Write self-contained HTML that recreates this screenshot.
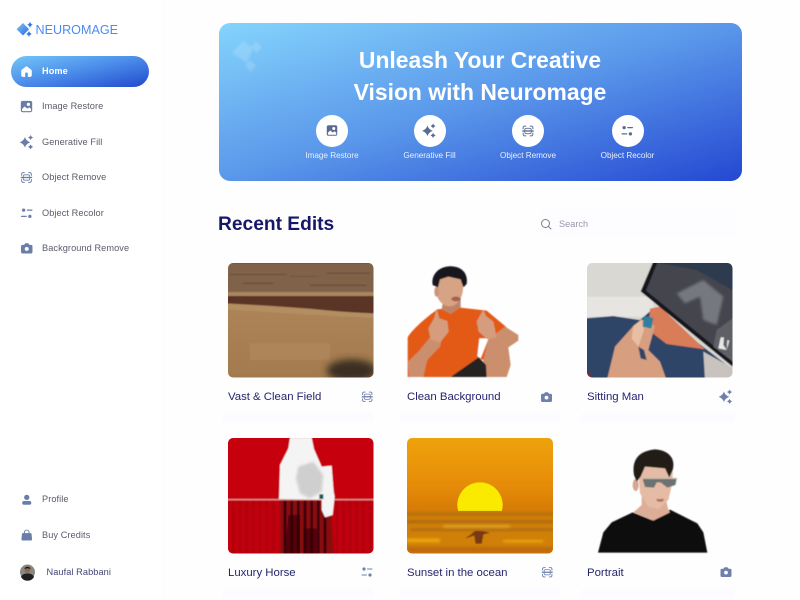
<!DOCTYPE html>
<html><head><meta charset="utf-8"><style>
html,body{margin:0;padding:0;width:800px;height:600px;overflow:hidden;background:#fefeff;font-family:"Liberation Sans",sans-serif}
.t{position:absolute;white-space:nowrap;line-height:1;filter:blur(.25px)}
.nav{font-size:9.2px;color:#5b5b6b;left:42px;letter-spacing:.08px}
.cap{font-size:8.2px;color:#e8effc;letter-spacing:-.03px;transform:translateX(-50%)}
.ttl{font-size:11.4px;color:#25256f;letter-spacing:-.01px}
.h{font-size:22.9px;font-weight:700;color:#fff;left:218px;width:524px;text-align:center}
.circ{position:absolute;width:32px;height:32px;border-radius:50%;background:#fff;top:115px}
.sh{position:absolute;background:#fcfbff;height:10px;border-radius:4px}
svg{position:absolute;left:0;top:0}
</style></head><body>
<div style="position:absolute;left:0;top:0;width:162px;height:600px;background:#fff;box-shadow:1px 0 3px #fcfbff"></div>
<div style="position:absolute;left:11px;top:56px;width:138px;height:31px;border-radius:16px;background:linear-gradient(to bottom right,#74c6f7 0%,#4a8bea 50%,#2149cc 100%)"></div>
<div style="position:absolute;left:218.5px;top:23px;width:523.5px;height:158px;border-radius:11px;background:linear-gradient(to bottom right,#84d4fc 0%,#5a97ea 50%,#2448d2 100%)"></div>
<div class="sh" style="left:222px;top:413px;width:152px"></div><div class="sh" style="left:400px;top:413px;width:160px"></div><div class="sh" style="left:580px;top:413px;width:155px"></div>
<div class="sh" style="left:222px;top:589px;width:152px"></div><div class="sh" style="left:400px;top:589px;width:160px"></div><div class="sh" style="left:580px;top:589px;width:155px"></div>
<div class="sh" style="left:540px;top:209px;width:196px;height:28px;background:#fdfdff"></div>
<div class="circ" style="left:316px"></div><div class="circ" style="left:414px"></div><div class="circ" style="left:512px"></div><div class="circ" style="left:611.5px"></div>

<svg width="800" height="600" viewBox="0 0 800 600">
<defs>
<filter id="b" x="-5%" y="-5%" width="110%" height="110%"><feGaussianBlur stdDeviation="1.6"/></filter>
<filter id="bb" x="-30%" y="-30%" width="160%" height="160%"><feGaussianBlur stdDeviation="11"/></filter>
<filter id="bs" x="-20%" y="-20%" width="140%" height="140%"><feGaussianBlur stdDeviation="4"/></filter>
<filter id="bi" x="-10%" y="-10%" width="120%" height="120%"><feGaussianBlur stdDeviation=".25"/></filter>
<filter id="bd" x="-20%" y="-20%" width="140%" height="140%"><feGaussianBlur stdDeviation="1"/></filter>
<clipPath id="c1"><rect x="228" y="263" width="145.5" height="114.5" rx="5"/></clipPath>
<clipPath id="c3"><rect x="587" y="263" width="145.5" height="114.5" rx="5"/></clipPath>
<clipPath id="c4"><rect x="228" y="438" width="145.5" height="115.5" rx="5"/></clipPath>
<clipPath id="c5"><rect x="407" y="438" width="146" height="115.5" rx="5"/></clipPath>
<clipPath id="sun"><rect x="700" y="100" width="220" height="158"/></clipPath>
<linearGradient id="g5" x1="0" y1="0" x2="0" y2="1"><stop offset="0" stop-color="#eea40c"/><stop offset=".65" stop-color="#e68c08"/><stop offset="1" stop-color="#d57a06"/></linearGradient>
<linearGradient id="gf" x1="0" y1="0" x2="0" y2="1"><stop offset="0" stop-color="#b58b5e"/><stop offset="1" stop-color="#a27a4e"/></linearGradient>
<linearGradient id="gl" x1="0" y1="0" x2="1" y2="1"><stop offset="0" stop-color="#7cc8f8"/><stop offset="1" stop-color="#2f66e0"/></linearGradient>
<symbol id="home" viewBox="0 0 24 24"><path d="M12 2 3.500 8.500C2.700 9.100 2.300 10 2.300 11v8c0 1.500 1.200 3 3 3H9.500v-6.300c0-1.200 1-2.200 2.500-2.200s2.500 1 2.500 2.200V22h4.200c1.800 0 3-1.500 3-3v-8c0-1-.4-1.900-1.200-2.500z"/></symbol>
<symbol id="img" viewBox="0 0 24 24"><path fill-rule="evenodd" d="M5 1.500h14A3.500 3.500 0 0 1 22.500 5v14a3.500 3.500 0 0 1-3.500 3.500H5A3.500 3.500 0 0 1 1.500 19V5A3.500 3.500 0 0 1 5 1.500zM15.500 5a3 3 0 1 0 0 6 3 3 0 0 0 0-6zM3.800 16.500V19A1.500 1.500 0 0 0 5 20.500h14a1.500 1.500 0 0 0 1.500-1.500v-2.500L17 13.500l-3.500 2.500-5-4z"/></symbol>
<symbol id="spark" viewBox="0 0 24 24"><path d="M9.500 4Q11 10 18 12.500 11 15 9.500 21 8 15 1 12.500 8 10 9.500 4zM18.500 0.500Q19.300 3.400 22.800 4.800 19.300 6.200 18.500 9 17.700 6.200 14.200 4.800 17.700 3.400 18.500 0.500zM18.500 15.500Q19.300 18.300 22.800 19.700 19.300 21 18.500 24 17.700 21 14.200 19.700 17.700 18.300 18.500 15.500z"/></symbol>
<symbol id="scan" viewBox="0 0 24 24"><path fill="none" stroke="currentColor" stroke-width="1.800" stroke-linecap="round" d="M3 8V6a3 3 0 0 1 3-3h2M16 3h2a3 3 0 0 1 3 3v2M21 16v2a3 3 0 0 1-3 3h-2M8 21H6a3 3 0 0 1-3-3v-2"/><rect x="6" y="7" width="12" height="10" rx="3" fill="none" stroke="currentColor" stroke-width="1.500"/><path stroke="currentColor" stroke-width="2.500" d="M1.500 12h21"/></symbol>
<symbol id="sl" viewBox="0 0 24 24"><circle cx="6" cy="6" r="3.200"/><circle cx="18" cy="18" r="3.200"/><path fill="none" stroke="currentColor" stroke-width="2.200" stroke-linecap="round" d="M13 6h9M2 18h9"/></symbol>
<symbol id="cam" viewBox="0 0 24 24"><path fill-rule="evenodd" d="M9 2.500h6l2 3h3a3 3 0 0 1 3 3V19a3 3 0 0 1-3 3H4a3 3 0 0 1-3-3V8.500a3 3 0 0 1 3-3h3zm3 7a3.800 3.800 0 1 0 0 7.600 3.800 3.800 0 0 0 0-7.600z"/></symbol>
<symbol id="user" viewBox="0 0 24 24"><circle cx="12" cy="7" r="5.500"/><rect x="2.500" y="14.500" width="19" height="8" rx="4"/></symbol>
<symbol id="bag" viewBox="0 0 24 24"><path d="M4.500 8h15c1 0 1.500.6 1.700 1.500l1 10c.1 1.500-.8 2.500-2.200 2.500H4c-1.400 0-2.300-1-2.200-2.500l1-10C3 8.600 3.500 8 4.500 8z"/><path fill="none" stroke="currentColor" stroke-width="1.800" d="M7.500 11V6.500a4.500 4.500 0 0 1 9 0V11"/></symbol>
</defs>

<!-- logo -->
<g filter="url(#bi)">
<path d="M23 23 29 29.300 23 35.500 16.500 29.300z" fill="url(#gl)"/>
<g fill="#2f78ea"><path d="M30 21.500Q30.500 24 32.800 24.800 30.500 25.500 30 28 29.500 25.500 27.200 24.800 29.500 24 30 21.500z"/><path d="M29 30.800Q29.500 33 31.800 34 29.500 34.800 29 37 28.500 34.800 26.200 34 28.500 33 29 30.800z"/></g>
</g>

<!-- nav icons -->
<g fill="#fff" color="#fff" filter="url(#bi)"><use href="#home" x="20" y="65" width="13" height="13"/></g>
<g fill="#6a7ea8" color="#6a7ea8" filter="url(#bi)">
<use href="#img" x="20" y="100" width="13" height="13"/>
<use href="#spark" x="19" y="134.500" width="15" height="15"/>
<use href="#scan" x="20" y="171" width="13" height="13"/>
<use href="#sl" x="20.500" y="207" width="12.500" height="12.500"/>
<use href="#cam" x="20.500" y="242" width="12.500" height="12.500"/>
<use href="#user" x="21" y="494" width="11.500" height="11.500"/>
<use href="#bag" x="20.500" y="529" width="12.500" height="12.500"/>
</g>
<!-- avatar -->
<circle cx="27.500" cy="572" r="7.500" fill="#8a8780"/>
<path d="M21 577c1-3 4-3.500 6.500-3.500s5.500.5 6.500 3.500a7.500 7.500 0 0 1-13 0z" fill="#1f1f20"/>
<circle cx="27.500" cy="570" r="2.800" fill="#8d6a56"/><path d="M24.500 569c0-3 6-3 6 0-2-1-4-1-6 0z" fill="#1c1614"/>

<!-- hero sparkle deco -->
<g fill="#fff" opacity=".16" filter="url(#bd)"><path d="M243 41 253 48 247 63 232 53z"/><path d="M256 42 262 47 257 53 251 47z"/><path d="M250 60 256 65 251 72 245 66z"/></g>
<!-- hero icons -->
<g fill="#5a6a92" color="#5a6a92" filter="url(#bi)">
<use href="#img" x="326" y="124.500" width="12" height="12"/>
<use href="#spark" x="421.500" y="123" width="15" height="15"/>
<use href="#scan" x="521.500" y="124.500" width="13" height="13"/>
<use href="#sl" x="621" y="124.500" width="12.500" height="12.500"/>
</g>
<!-- search -->
<circle cx="545.500" cy="223.500" r="4" fill="none" stroke="#7f7b95" stroke-width="1"/><path d="M548.500 226.500l2.500 2.500" stroke="#7f7b95" stroke-width="1" stroke-linecap="round"/>

<!-- row icons -->
<g fill="#6f80ac" color="#6f80ac" filter="url(#bi)">
<use href="#scan" x="361" y="390.500" width="12.500" height="12.500"/>
<use href="#cam" x="540.500" y="391" width="12" height="12"/>
<use href="#spark" x="718" y="389" width="15" height="15"/>
<use href="#sl" x="361" y="566" width="12" height="12"/>
<use href="#scan" x="541" y="566" width="12.500" height="12.500"/>
<use href="#cam" x="720" y="566" width="12" height="12"/>
</g>

<!-- 1 field -->
<g clip-path="url(#c1)"><g transform="translate(210,250) scale(.33333)"><g filter="url(#b)">
<rect x="50" y="30" width="445" height="355" fill="url(#gf)"/>
<rect x="50" y="30" width="445" height="100" fill="#80624a"/>
<rect x="50" y="30" width="445" height="10" fill="#644c3a"/>
<path d="M60 72H230V75H60zM240 78H320V80H240zM350 68H480V71H350z" fill="#654b38"/>
<path d="M100 98H190V102H100zM300 104H470V108H300z" fill="#6a4f3b"/>
<rect x="50" y="126" width="445" height="12" fill="#a98560"/>
<path d="M50 138H495V190L400 186 300 176 190 168 120 164 50 160z" fill="#5a3625"/>
<path d="M50 162 190 170 300 178 495 192V204L300 194 50 178z" fill="#b48e63"/>
<rect x="120" y="280" width="240" height="50" fill="#b08b5f" opacity=".6"/>
</g><ellipse cx="425" cy="362" rx="75" ry="34" fill="#3a2f24" filter="url(#bb)"/></g></g>

<!-- 2 man -->
<g transform="translate(210,250) scale(.33333)" filter="url(#b)">
<path d="M593 381V262C605 240 645 205 682 178L745 172 830 182 890 232 845 268 820 330 805 325 790 350 722 381z" fill="#e35a18"/>
<path d="M597 381 594 335 625 305 660 262 695 268 690 290 652 330 640 381z" fill="#cb8f6d"/>
<path d="M835 268 885 230 925 255 925 272 895 292 902 345 890 381 812 381 820 330z" fill="#cb8f6e"/>
<path d="M808 265H836L812 325 802 318z" fill="#fff"/>
<path d="M722 381 806 322 828 345 830 381z" fill="#262021"/>
<path d="M695 178 702 140H752L752 172 722 192z" fill="#bf8468"/>
<ellipse cx="718" cy="115" rx="41" ry="54" fill="#d6a385"/>
<ellipse cx="680" cy="125" rx="7" ry="15" fill="#c99678"/>
<path d="M668 105C662 68 695 47 725 49 757 50 775 72 770 102L760 112 752 88 715 80 690 88 684 112z" fill="#17161a"/>
<path d="M672 205 680 176 688 205 712 213 716 245 690 278 662 268 655 235z" fill="#d59d7d"/>
<path d="M820 178 828 198 850 215 860 262 832 268 806 245 800 215z" fill="#d59d7d"/>
<ellipse cx="738" cy="147" rx="14" ry="7" fill="#a85f50"/>
</g>

<!-- 3 hand/tablet -->
<g clip-path="url(#c3)"><g transform="translate(570,250) scale(.33333)" filter="url(#b)">
<rect x="45" y="30" width="450" height="355" fill="#d9d8d3"/>
<rect x="50" y="140" width="200" height="60" fill="#e6e5e1"/>
<path d="M45 205 130 198 210 210 250 175 490 360V390H45z" fill="#2f4568"/>
<path d="M240 176 270 170 405 298 290 282 235 240z" fill="#d97c58"/>
<path d="M400 305 490 355V390H405z" fill="#c8c3bf"/>
<path d="M45 350 70 390H45z" fill="#7a2c20"/>
<path d="M252 30H495V356L212 124z" fill="#15161c"/>
<path d="M262 38H495V340L228 122z" fill="#44454e"/>
<path d="M262 38H495V125L380 60z" fill="#2f3a50"/>
<path d="M320 130 400 90 460 140 440 225 400 210 390 140 345 160z" fill="#767880" filter="url(#bs)"/>
<path d="M440 240 495 200V340L430 290z" fill="#5e6165"/>
<path d="M452 262 462 262 460 285 470 300 445 295zM472 270 478 272 470 300z" fill="#e7e7e7"/>
<path d="M112 385 135 290 190 228 215 208 255 228 235 300 270 335 288 385z" fill="#d79f80"/>
<path d="M190 228 215 208 222 240 205 290 185 265z" fill="#e9bfa3"/>
<path d="M222 198 250 204 244 236 218 230z" fill="#2f7f9f"/>
<path d="M205 290 222 300 230 330 212 325z" fill="#2f4568"/>
</g></g>

<!-- 4 horse -->
<g clip-path="url(#c4)"><g transform="translate(210,425) scale(.33333)" filter="url(#b)">
<rect x="50" y="30" width="445" height="360" fill="#c7000a"/>
<rect x="50" y="226" width="445" height="160" fill="#c00009"/>
<path d="M70 226V386M90 226V386M110 226V386M130 226V386M150 226V386M170 226V386M190 226V386M380 226V386M400 226V386M420 226V386M440 226V386M460 226V386M480 226V386" stroke="#ab0008" stroke-width="5"/>
<path d="M210 226H360L372 386H210z" fill="#8a0a10"/>
<path d="M225 226V386M245 226V386M265 226V386M285 226V386M305 226V386M325 226V386M345 226V386" stroke="#3c0508" stroke-width="8"/>
<path d="M235 270H270V386H225zM280 310H320V386H280z" fill="#2a0406" opacity=".55"/>
<rect x="50" y="222" width="445" height="4" fill="#df9090"/>
<path d="M240 38 305 38 312 72 335 125 365 122 371 200 374 215 368 270 345 277 335 255 335 224 207 222 210 120 235 70z" fill="#f5f4f4"/>
<path d="M265 125 310 110 340 150 335 200 300 220 270 205 258 160z" fill="#d0cfcf" filter="url(#bs)"/>
<path d="M328 208h12v14h-12z" fill="#1f5858"/>
</g></g>

<!-- 5 sunset -->
<g clip-path="url(#c5)"><g transform="translate(210,425) scale(.33333)">
<rect x="585" y="30" width="450" height="232" fill="url(#g5)"/>
<rect x="585" y="258" width="450" height="130" fill="#d08008"/>
<circle cx="810" cy="240" r="68" fill="#f9ea00" clip-path="url(#sun)"/>
<g filter="url(#bs)">
<rect x="585" y="262" width="450" height="10" fill="#b8700e"/>
<path d="M590 285H1030V295H590zM600 310H1030V318H600z" fill="#b06b12"/>
<path d="M590 340H690V352H590zM880 345H1000V352H880z" fill="#eba410"/>
<path d="M590 365H1030V384H590z" fill="#bf6c0c"/>
<path d="M700 300H900V308H700z" fill="#e0a020"/>
</g>
<path d="M795 318h20l25 5-20 5 -5 28h-18l-4-25-28 10 20-14z" fill="#6a2e18" opacity=".85" filter="url(#b)"/>
</g></g>

<!-- 6 portrait -->
<g transform="translate(570,425) scale(.33333)" filter="url(#b)">
<path d="M84 383 100 322 125 292 188 262 245 285 300 254 382 295 400 322 412 383z" fill="#0d0c0e"/>
<path d="M190 262 215 240 215 210H285L295 254 300 262 250 287z" fill="#dcae98"/>
<path d="M203 120H308L308 170 295 225 265 252 235 245 210 205z" fill="#e5bba5"/>
<ellipse cx="197" cy="180" rx="9" ry="18" fill="#d6a68e"/>
<path d="M192 150C185 105 205 78 255 73 295 75 318 100 308 135L298 158 285 130 225 125 212 155 200 170z" fill="#241c19"/>
<path d="M218 162H320L316 180 292 188 272 172H260L252 188 225 186z" fill="#6a7371"/>
<path d="M218 160H322" stroke="#c2bbb0" stroke-width="3"/>
<path d="M258 222h25l-5 8h-15z" fill="#b56a5a"/>
</g>
</svg>

<div class="t" style="left:35.500px;top:23.500px;font-size:12.600px;color:#4a8cf0">NEUROMAGE</div>
<div class="t nav" style="top:66.500px;color:#fff;font-weight:700">Home</div>
<div class="t nav" style="top:102px">Image Restore</div>
<div class="t nav" style="top:137.500px">Generative Fill</div>
<div class="t nav" style="top:173px">Object Remove</div>
<div class="t nav" style="top:208.500px">Object Recolor</div>
<div class="t nav" style="top:244px">Background Remove</div>
<div class="t nav" style="top:495px">Profile</div>
<div class="t nav" style="top:530.500px">Buy Credits</div>
<div class="t nav" style="top:567.500px;left:46.500px;color:#45457a">Naufal Rabbani</div>

<div class="t h" style="top:49px">Unleash Your Creative</div>
<div class="t h" style="top:80.500px">Vision with Neuromage</div>
<div class="t cap" style="left:332px;top:151.500px">Image Restore</div>
<div class="t cap" style="left:429.500px;top:151.500px">Generative Fill</div>
<div class="t cap" style="left:528px;top:151.500px">Object Remove</div>
<div class="t cap" style="left:627.500px;top:151.500px">Object Recolor</div>

<div class="t" style="left:218px;top:215px;font-size:19.200px;font-weight:700;color:#17176a">Recent Edits</div>
<div class="t" style="left:559px;top:219.500px;font-size:9.200px;color:#9a96ad">Search</div>

<div class="t ttl" style="left:228px;top:392px">Vast &amp; Clean Field</div>
<div class="t ttl" style="left:407px;top:392px">Clean Background</div>
<div class="t ttl" style="left:587px;top:392px">Sitting Man</div>
<div class="t ttl" style="left:228px;top:568px">Luxury Horse</div>
<div class="t ttl" style="left:407px;top:568px">Sunset in the ocean</div>
<div class="t ttl" style="left:587px;top:568px">Portrait</div>
</body></html>
